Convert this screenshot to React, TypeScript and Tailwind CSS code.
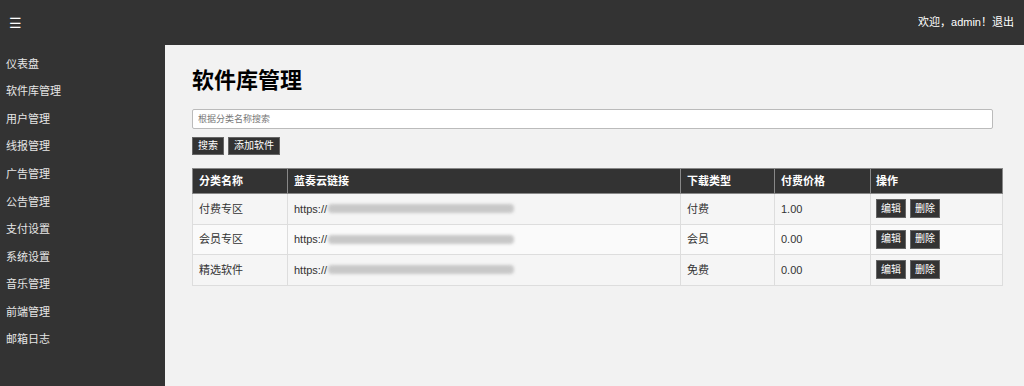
const font = "font-['Liberation_Sans','Noto_Sans_CJK_SC',sans-serif]";

const menu = [
  "仪表盘",
  "软件库管理",
  "用户管理",
  "线报管理",
  "广告管理",
  "公告管理",
  "支付设置",
  "系统设置",
  "音乐管理",
  "前端管理",
  "邮箱日志",
];

const rows = [
  { name: "付费专区", type: "付费", price: "1.00", bg: "bg-[#f5f5f5]" },
  { name: "会员专区", type: "会员", price: "0.00", bg: "bg-[#fafafa]" },
  { name: "精选软件", type: "免费", price: "0.00", bg: "bg-[#f5f5f5]" },
];

function SmallButton({ label }: { label: string }) {
  return (
    <button className="h-[19px] px-[4px] bg-[#333] text-white text-[10px] leading-none border border-[#666]">
      {label}
    </button>
  );
}

export default function App() {
  return (
    <div className={`w-[1024px] h-[386px] bg-[#f2f2f2] flex flex-col overflow-hidden ${font}`}>
      <header className="h-[45px] shrink-0 bg-[#333] flex items-center justify-between pl-[9px] pr-[10px] text-white text-[11px]">
        <span className="text-[14px] leading-none">☰</span>
        <span>欢迎，admin！退出</span>
      </header>
      <div className="flex flex-1 min-h-0">
        <nav className="w-[165px] shrink-0 bg-[#333] pt-[5px]">
          {menu.map((m) => (
            <div key={m} className="h-[27.6px] flex items-center pl-[6px] text-[11px] text-[#e6e6e6]">
              {m}
            </div>
          ))}
        </nav>
        <main className="flex-1 pl-[27px] pr-[21px] pt-[21px]">
          <h1 className="text-[22px] font-bold text-black leading-[30px]">软件库管理</h1>
          <input
            className="mt-[13px] block w-[801px] h-[20px] bg-white border border-[#bbb] rounded-[2px] px-[5px] text-[9px] placeholder:text-[#777] outline-none"
            placeholder="根据分类名称搜索"
          />
          <div className="mt-[8px] flex gap-[4px]">
            <button className="h-[18px] px-[5px] bg-[#333] text-white text-[10px] leading-none border border-[#666]">
              搜索
            </button>
            <button className="h-[18px] px-[5px] bg-[#333] text-white text-[10px] leading-none border border-[#666]">
              添加软件
            </button>
          </div>
          <table className="mt-[13px] w-[811px] border-collapse text-[11px] text-[#333]">
            <thead>
              <tr className="bg-[#333] text-white h-[25px]">
                <th className="w-[95px] text-left font-bold px-[6px] border border-[#888]">分类名称</th>
                <th className="w-[393px] text-left font-bold px-[6px] border border-[#888]">蓝奏云链接</th>
                <th className="w-[94px] text-left font-bold px-[6px] border border-[#888]">下载类型</th>
                <th className="w-[96px] text-left font-bold px-[6px] border border-[#888]">付费价格</th>
                <th className="text-left font-bold px-[5px] border border-[#888]">操作</th>
              </tr>
            </thead>
            <tbody>
              {rows.map((r) => (
                <tr key={r.name} className={`${r.bg} h-[30.5px]`}>
                  <td className="px-[6px] border border-[#ddd]">{r.name}</td>
                  <td className="px-[6px] border border-[#ddd]">
                    <div className="flex items-center">
                      <span className="text-[11px]">https://</span>
                      <span className="ml-[1px] h-[9px] w-[186px] bg-[#c8c8c8] blur-[1.5px] rounded-sm" />
                    </div>
                  </td>
                  <td className="px-[6px] border border-[#ddd]">{r.type}</td>
                  <td className="px-[6px] border border-[#ddd]">{r.price}</td>
                  <td className="px-[5px] border border-[#ddd]">
                    <div className="flex gap-[4px]">
                      <SmallButton label="编辑" />
                      <SmallButton label="删除" />
                    </div>
                  </td>
                </tr>
              ))}
            </tbody>
          </table>
        </main>
      </div>
    </div>
  );
}
